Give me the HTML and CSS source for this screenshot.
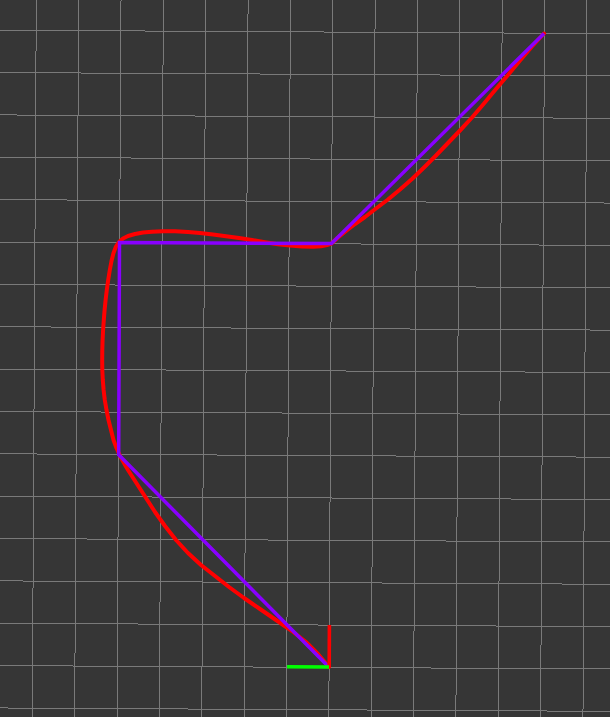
FILE: index.html
```html
<!DOCTYPE html>
<html lang="en">
<head>
<meta charset="utf-8">
<title>Path viewer</title>
<link rel="stylesheet" href="styles.css">
</head>
<body>
<main class="viewport">
  <svg class="scene" width="610" height="717" viewBox="0 0 610 717" xmlns="http://www.w3.org/2000/svg">
    <g class="grid">
      <line x1="36.3" y1="0" x2="32.3" y2="717"/>
      <line x1="78.66" y1="0" x2="74.66" y2="717"/>
      <line x1="121.02" y1="0" x2="117.02" y2="717"/>
      <line x1="163.38" y1="0" x2="159.38" y2="717"/>
      <line x1="205.74" y1="0" x2="201.74" y2="717"/>
      <line x1="248.1" y1="0" x2="244.1" y2="717"/>
      <line x1="290.46" y1="0" x2="286.46" y2="717"/>
      <line x1="332.82" y1="0" x2="328.82" y2="717"/>
      <line x1="375.18" y1="0" x2="371.18" y2="717"/>
      <line x1="417.54" y1="0" x2="413.54" y2="717"/>
      <line x1="459.9" y1="0" x2="455.9" y2="717"/>
      <line x1="502.26" y1="0" x2="498.26" y2="717"/>
      <line x1="544.62" y1="0" x2="540.62" y2="717"/>
      <line x1="586.98" y1="0" x2="582.98" y2="717"/>

      <line x1="0" y1="30.2" x2="610" y2="33.6"/>
      <line x1="0" y1="72.56" x2="610" y2="75.96"/>
      <line x1="0" y1="114.92" x2="610" y2="118.32"/>
      <line x1="0" y1="157.28" x2="610" y2="160.68"/>
      <line x1="0" y1="199.64" x2="610" y2="203.04"/>
      <line x1="0" y1="242.0" x2="610" y2="245.4"/>
      <line x1="0" y1="284.36" x2="610" y2="287.76"/>
      <line x1="0" y1="326.72" x2="610" y2="330.12"/>
      <line x1="0" y1="369.08" x2="610" y2="372.48"/>
      <line x1="0" y1="411.44" x2="610" y2="414.84"/>
      <line x1="0" y1="453.8" x2="610" y2="457.2"/>
      <line x1="0" y1="496.16" x2="610" y2="499.56"/>
      <line x1="0" y1="538.52" x2="610" y2="541.92"/>
      <line x1="0" y1="580.88" x2="610" y2="584.28"/>
      <line x1="0" y1="623.24" x2="610" y2="626.64"/>
      <line x1="0" y1="665.6" x2="610" y2="669.0"/>
      <line x1="0" y1="707.96" x2="610" y2="711.36"/>
    </g>

    <polyline class="smooth-path" points="329,667 318,654 306,642 292,631 276,620 260,609 244,598 229,587 215,576 201,565 188,553 176,540 165,526 155,512 146,498 137,484 128,470 120.5,457 116.5,448 113.5,440 111,430 108.5,420 106.5,410 104.8,400 103.6,390 102.8,380 102.3,370 102.2,360 102.3,350 102.6,340 103.1,330 103.8,320 104.6,310 105.6,300 106.8,290 108.2,280 109.8,270 111.5,261 113.5,253 116,246.5 119,242 123,238.5 128,236 135,234 143,232.5 152,231.7 163,231.2 175,231.3 188,232 200,233 213,234.6 226,236.2 239,238 252,240 265,242.2 278,244.2 290,245.6 302,246.5 313,246.8 321,246.3 327,245 331.5,243.5 338,237.5 346,231 355,224 365,217 376,208.5 388,199.5 400,189.5 412,179 424,167.5 436,155.5 448,143 460,130.5 472,117.5 484,103.5 496,89 508,75 520,60.5 532,46.5 544,33.5"/>

    <polyline class="waypoints" points="328.8,667 118.7,454.8 119.5,242.5 331.5,243.5 544,33.5"/>

    <g class="axes">
      <line class="axis-x" x1="329.2" y1="667" x2="329.4" y2="625"/>
      <line class="axis-y" x1="329" y1="667" x2="287" y2="666.8"/>
    </g>
  </svg>
</main>
</body>
</html>
```

FILE: styles.css
```css
html, body {
  margin: 0;
  padding: 0;
  background: #363636;
}

.viewport {
  width: 610px;
  height: 717px;
  overflow: hidden;
  background: #363636;
}

.scene {
  display: block;
}

.grid line {
  stroke: #7a7a7a;
  stroke-width: 1;
  shape-rendering: crispEdges;
}

.smooth-path {
  fill: none;
  stroke: #ff0000;
  stroke-width: 4;
  stroke-linejoin: round;
  stroke-linecap: round;
}

.waypoints {
  fill: none;
  stroke: #8800ff;
  stroke-width: 3.5;
  stroke-linejoin: miter;
  stroke-linecap: butt;
}

.axes line {
  stroke-width: 3.6;
  stroke-linecap: butt;
}

.axis-x {
  stroke: #ff0000;
}

.axis-y {
  stroke: #00ff00;
}
```
